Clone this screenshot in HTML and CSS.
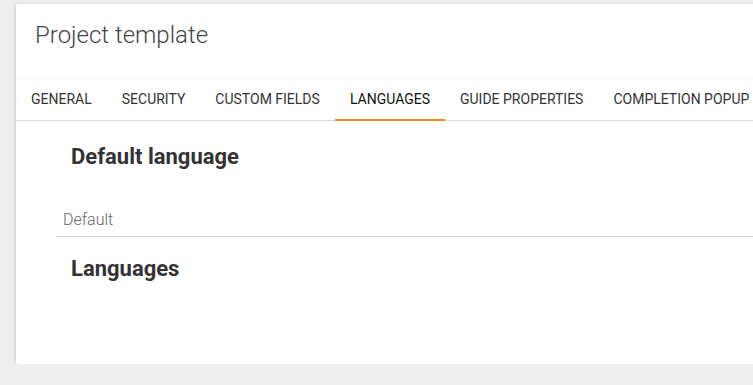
FILE: index.html
```html
<!DOCTYPE html>
<html lang="en">
<head>
    <meta charset="UTF-8">
    <title>Project template</title>
    <link rel="stylesheet" href="styles.css">
</head>
<body>
    <div class="card">
        <div class="card-header">
            <h2>Project template</h2>
        </div>

        <!-- Tabs -->
        <ul class="tabs">
            <li class="tab">General</li>
            <li class="tab">Security</li>
            <li class="tab">Custom fields</li>
            <li class="tab active">Languages</li>
            <li class="tab">Guide properties</li>
            <li class="tab">Completion popup</li>
        </ul>

        <div class="tab-content">
            <h3>Default language</h3>
            <div class="field">
                <span class="field-value">Default</span>
            </div>
            <h3>Languages</h3>
        </div>
    </div>
</body>
</html>
```
FILE: styles.css
```css
body {
    margin: 0;
    background-color: #eeeeee;
    font-family: Roboto, "Liberation Sans", sans-serif;
    color: #333;
    overflow: hidden;
}

.card {
    margin: 4px 0 0 16px;
    height: 360px;
    background-color: #fff;
    border-radius: 2px 0 0 2px;
    box-shadow: 0 1px 4px rgba(0, 0, 0, 0.18);
}

.card-header {
    height: 74px;
    padding: 0 19px;
    border-bottom: 1px solid #f0f0f0;
    display: flex;
    align-items: center;
}

.card-header h2 {
    margin: 0;
    font-size: 24px;
    font-weight: 300;
    color: #444;
    position: relative;
    top: -6px;
}

.tabs {
    list-style: none;
    margin: 0;
    padding: 0;
    display: flex;
    height: 41px;
    border-bottom: 1px solid #ddd;
    white-space: nowrap;
}

.tab {
    padding: 0 15px;
    display: flex;
    align-items: center;
    font-size: 14px;
    text-transform: uppercase;
    color: #333;
    border-bottom: 2px solid transparent;
    margin-bottom: -1px;
}

.tab.active {
    color: #111;
    border-bottom-color: #f08a24;
}

.tab-content {
    padding: 0 0 0 40px;
}

.tab-content h3 {
    margin: 0;
    padding-left: 15px;
    font-size: 22px;
    font-weight: 700;
    color: #333;
}

.tab-content h3:first-child {
    padding-top: 23px;
}

.field {
    margin-top: 41px;
    height: 26px;
    border-bottom: 1px solid #d6d6d6;
    padding-left: 7px;
    margin-bottom: 19px;
}

.field-value {
    font-size: 16px;
    font-weight: 300;
    color: #666;
}
```
